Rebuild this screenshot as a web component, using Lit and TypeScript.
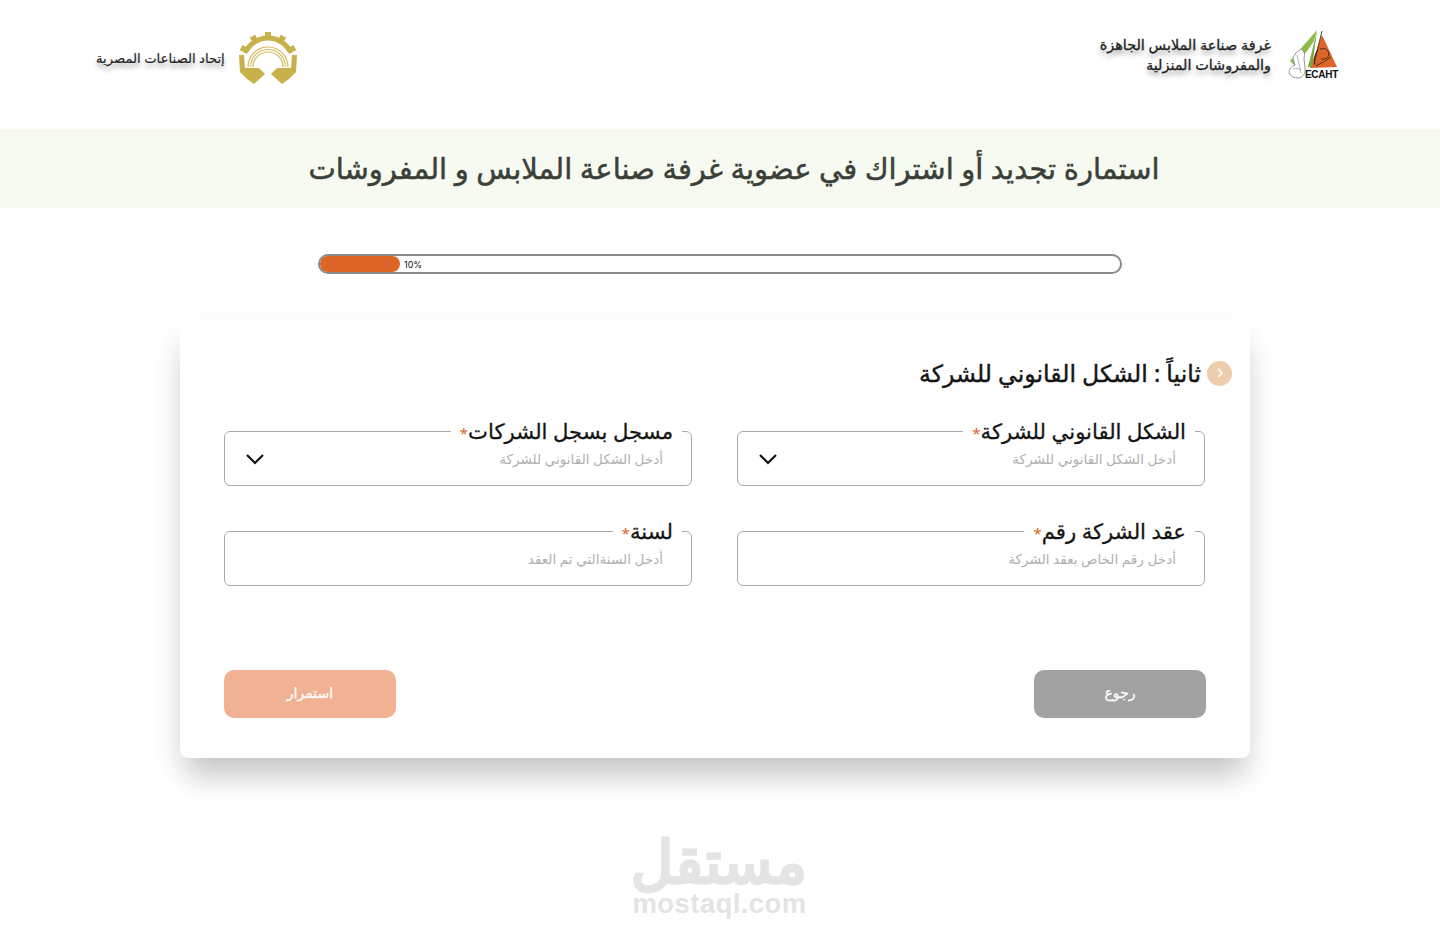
import { LitElement, html, css, svg } from "lit";
import { customElement } from "lit/decorators.js";

const chevron = html`<svg class="chev" width="20" height="12" viewBox="0 0 20 12"><path d="M2 2l8 8 8-8" fill="none" stroke="#111" stroke-width="2.2"/></svg>`;

const ecaht = html`<svg width="52" height="52" viewBox="0 0 52 52" class="logo">
  <path d="M35 6 L50 38 L23 39 Z" fill="#dd6528"/>
  <path d="M30 1 L27 12 L9 38 L3 32 Z" fill="#8dbb45"/>
  <path d="M30 2 L25 38 L21 38 L27 14 Z" fill="#7aa83a"/>
  <path d="M14 20 q5 3 3 9 l1 10 q1 8 -6 10 q-8 0 -10 -5 q0 -6 6 -8 l-2 -7 q2 -6 8 -9 z" fill="#fff" stroke="#9a9a9a" stroke-width="1"/>
  <path d="M10 26 l4 18 M6 40 q4 -2 8 1" fill="none" stroke="#a5a5a5" stroke-width="0.8"/>
  <path d="M35 2 L27 35 M31 21 q-5 6 -3 15 M33 20 q8 -2 9 5 q-1 6 -8 5 M29 37 q8 -4 15 -9" fill="none" stroke="#3a2a20" stroke-width="0.9"/>
  <text x="18" y="49" class="ecaht">ECAHT</text>
</svg>`;

const teeth = [-60, -30, 0, 30, 60].map(
  (a) => svg`<rect x="26" y="0" width="6" height="8" transform="rotate(${a} 29 31)" />`
);

const gear = html`<svg width="58" height="52" viewBox="0 0 58 52" class="logo">
  <g fill="#c8b04b">${teeth}</g>
  <path d="M6.55 20A25 25 0 0 1 51.45 20" fill="none" stroke="#c8b04b" stroke-width="5"/>
  <g fill="none" stroke="#cfba5c" stroke-width="1.2">
    <path d="M9 35A20 20 0 0 1 49 35"/>
    <path d="M11.500 35A17.500 17.500 0 0 1 46.500 35"/>
    <path d="M14 35A15 15 0 0 1 44 35"/>
  </g>
  <g fill="#c8b04b">
    <path d="M0 23h5l1 13h14l6 6-11 10-7-5-7-7z"/>
    <path d="M58 23h-5l-1 13h-14l-6 6 11 10 7-5 7-7z"/>
  </g>
</svg>`;

@customElement("app-root")
export class AppRoot extends LitElement {
  static styles = css`
    :host {
      display: block;
      width: 1440px;
      height: 938px;
      overflow: hidden;
      background: #fff;
      font-family: "Noto Sans", "DejaVu Sans", sans-serif;
      color: #151515;
    }
    .top {
      height: 129px;
      display: flex;
      justify-content: space-between;
      align-items: center;
      padding: 0 101px 14px 96px;
      box-sizing: border-box;
    }
    .brand { display: flex; align-items: center; gap: 14px; }
    .brand-r { gap: 16px; padding-bottom: 6px; }
    .brand-text {
      font-size: 13.2px;
      line-height: 20px;
      text-align: right;
      color: #222;
      text-shadow: 0 4px 5px rgba(0, 0, 0, 0.4);
      direction: rtl;
      -webkit-text-stroke: 0.15px currentColor;
    }
    .brand-r .brand-text { font-size: 14.4px; -webkit-text-stroke: 0.3px currentColor; }
    .ecaht { font: 700 10px "Liberation Sans", sans-serif; fill: #111; letter-spacing: -0.3px; }
    .banner {
      height: 79px;
      background: #f6faf1;
      display: flex;
      align-items: center;
      justify-content: center;
      font-size: 29px;
      color: #3a3f39;
      direction: rtl;
      padding-left: 28px;
      padding-bottom: 2px;
      box-sizing: border-box;
      -webkit-text-stroke: 0.5px currentColor;
    }
    .progress {
      width: 804px;
      height: 20px;
      box-sizing: border-box;
      margin: 46px 0 0 318px;
      border: 2px solid #8a8a8a;
      border-radius: 10px;
      display: flex;
      align-items: center;
      gap: 4px;
    }
    .fill {
      width: 80px;
      height: 16px;
      background: #dc6426;
      border-radius: 8px;
    }
    .pct { font: 9px "Inter", "Liberation Sans", sans-serif; color: #111; }
    .card {
      width: 1070px;
      height: 438px;
      box-sizing: border-box;
      margin: 46px 0 0 180px;
      padding: 36px 45px 40px 44px;
      background: #fff;
      border-radius: 8px;
      box-shadow: 0 24px 30px -6px rgba(0, 0, 0, 0.2), 0 8px 36px rgba(0, 0, 0, 0.05);
      direction: rtl;
      display: flex;
      flex-direction: column;
    }
    .heading {
      display: flex;
      align-items: center;
      gap: 6px;
      margin-right: -27px;
      height: 34px;
      font-size: 23.6px;
      color: #151515;
      -webkit-text-stroke: 0.4px currentColor;
    }
    .bullet {
      width: 25px;
      height: 25px;
      border-radius: 50%;
      background: #eeccae;
      display: flex;
      align-items: center;
      justify-content: center;
      flex: none;
    }
    .grid {
      display: grid;
      grid-template-columns: 468px 468px;
      column-gap: 45px;
      row-gap: 33px;
      margin-top: 29px;
    }
    fieldset {
      margin: 0;
      padding: 0;
      height: 67px;
      box-sizing: border-box;
      border: 1px solid #a9a9a9;
      border-radius: 6px;
      min-width: 0;
    }
    legend {
      padding: 0 9px 0 9px;
      margin-right: 9px;
      font-size: 21.2px;
      line-height: 24px;
      color: #151515;
      height: 24px;
      -webkit-text-stroke: 0.3px currentColor;
    }
    legend b { color: #dc6426; font-weight: 400; font-size: 15px; -webkit-text-stroke: 0; }
    .inner {
      height: 31px;
      padding: 0 28px 0 20px;
      display: flex;
      align-items: center;
      justify-content: space-between;
    }
    .ph {
      font-size: 13.6px;
      color: #b0b0b0;
    }
    .actions {
      display: flex;
      justify-content: space-between;
      margin-top: auto;
      margin-right: -1px;
    }
    .btn {
      width: 172px;
      height: 48px;
      border-radius: 10px;
      display: flex;
      align-items: center;
      justify-content: center;
      color: #fff;
      font-size: 14px;
      -webkit-text-stroke: 0.25px currentColor;
      padding-bottom: 3px;
      box-sizing: border-box;
    }
    .back { background: #a2a2a2; }
    .next { background: #f1b294; }
    .wm {
      margin: 76px 0 0 632px;
      width: 175px;
      text-align: center;
      color: #e4e4e4;
    }
    .wm-ar {
      font-size: 59px;
      line-height: 52px;
      direction: rtl;
      white-space: nowrap;
      -webkit-text-stroke: 3px currentColor;
    }
    .wm-en {
      font: 700 27.5px/28px "Liberation Sans", sans-serif;
      letter-spacing: 0.4px;
      margin-top: 4px;
    }
  `;

  field(label: string, ph: string, select: boolean) {
    return html`<fieldset>
      <legend>${label}<b>*</b></legend>
      <div class="inner">
        <span class="ph">${ph}</span>
        ${select ? chevron : ""}
      </div>
    </fieldset>`;
  }

  render() {
    return html`
      <div class="top">
        <div class="brand">
          <div class="brand-text">إتحاد الصناعات المصرية</div>
          ${gear}
        </div>
        <div class="brand brand-r">
          <div class="brand-text">غرفة صناعة الملابس الجاهزة<br />والمفروشات المنزلية</div>
          ${ecaht}
        </div>
      </div>
      <div class="banner">استمارة تجديد أو اشتراك في عضوية غرفة صناعة الملابس و المفروشات</div>
      <div class="progress"><div class="fill"></div><span class="pct">10%</span></div>
      <div class="card">
        <div class="heading">
          <span class="bullet"><svg width="10" height="12" viewBox="0 0 10 12"><path d="M3 2l4 4-4 4" fill="none" stroke="#fff" stroke-width="1.5"/></svg></span>
          <span>ثانياً : الشكل القانوني للشركة</span>
        </div>
        <div class="grid">
          ${this.field("الشكل القانوني للشركة", "أدخل الشكل القانوني للشركة", true)}
          ${this.field("مسجل بسجل الشركات", "أدخل الشكل القانوني للشركة", true)}
          ${this.field("عقد الشركة رقم", "أدخل رقم الخاص بعقد الشركة", false)}
          ${this.field("لسنة", "أدخل السنةالتي تم العقد", false)}
        </div>
        <div class="actions">
          <div class="btn back">رجوع</div>
          <div class="btn next">استمرار</div>
        </div>
      </div>
      <div class="wm">
        <div class="wm-ar">مستقل</div>
        <div class="wm-en">mostaql.com</div>
      </div>
    `;
  }
}
